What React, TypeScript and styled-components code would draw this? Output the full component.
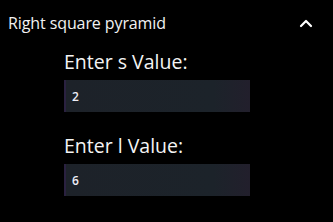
import { FC } from "react";
import styled, { createGlobalStyle } from "styled-components";

const GlobalStyle = createGlobalStyle`
  html, body {
    margin: 0;
    padding: 0;
    background: #000;
  }
  body {
    font-family: "Open Sans", "Noto Sans", sans-serif;
    color: #fff;
  }
`;

const Panel = styled.section`
  width: 333px;
  height: 222px;
  background: #000;
  overflow: hidden;
`;

const Header = styled.div`
  display: flex;
  align-items: center;
  justify-content: space-between;
  height: 46px;
  padding: 0 20px 0 8px;
`;

const Title = styled.h2`
  margin: 0;
  font-size: 16px;
  font-weight: 500;
  letter-spacing: -0.1px;
  color: #f2f2f2;
`;

const Toggle = styled.button`
  display: flex;
  align-items: center;
  justify-content: center;
  padding: 0;
  border: none;
  background: none;
  color: #fff;
  cursor: pointer;
`;

const Body = styled.div`
  display: flex;
  flex-direction: column;
  gap: 21px;
  padding: 3px 0 0 64px;
`;

const Field = styled.label`
  display: flex;
  flex-direction: column;
  gap: 5px;
`;

const FieldLabel = styled.span`
  font-size: 19.5px;
  line-height: 26px;
  color: #f4f4f4;
`;

const ValueInput = styled.input`
  box-sizing: border-box;
  width: 186px;
  height: 32px;
  padding: 0 6px;
  border: none;
  border-left: 2px solid #2a2140;
  background: linear-gradient(90deg, #1d2229 0%, #1c232a 80%, #221f2c 100%);
  color: #eeeef6;
  font-family: "Open Sans", sans-serif;
  font-size: 12px;
  font-weight: 600;
  outline: none;
`;

interface ValueFieldProps {
  name: string;
  value: string;
}

const ValueField: FC<ValueFieldProps> = ({ name, value }) => (
  <Field>
    <FieldLabel>Enter {name} Value:</FieldLabel>
    <ValueInput defaultValue={value} />
  </Field>
);

const ChevronUp = () => (
  <svg width="14" height="10" viewBox="0 0 14 10" fill="none">
    <path d="M2 8 L7 3 L12 8" stroke="currentColor" strokeWidth="2.2" strokeLinecap="round" strokeLinejoin="round" />
  </svg>
);

export default function App() {
  return (
    <>
      <GlobalStyle />
      <Panel>
        <Header>
          <Title>Right square pyramid</Title>
          <Toggle aria-label="collapse">
            <ChevronUp />
          </Toggle>
        </Header>
        <Body>
          <ValueField name="s" value="2" />
          <ValueField name="l" value="6" />
        </Body>
      </Panel>
    </>
  );
}
